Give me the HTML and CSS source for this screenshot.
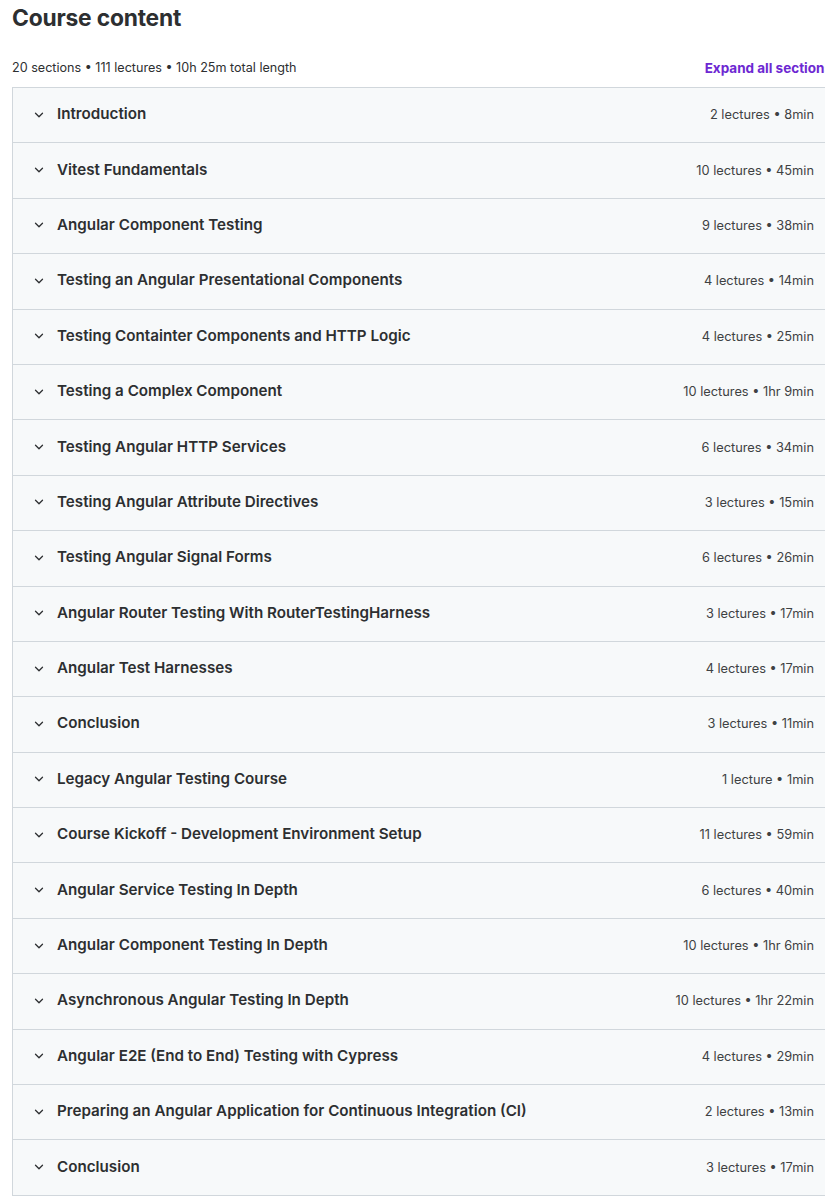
FILE: index.html
```html
<!DOCTYPE html>
<html>
<head>
<meta charset="utf-8">
<link rel="stylesheet" href="styles.css">
</head>
<body>
<div class="page">
  <h2 class="title">Course content</h2>
  <div class="meta">
    <span>20 sections • 111 lectures • 10h 25m total length</span>
    <a class="expand">Expand all sections</a>
  </div>
  <div class="sections" id="sections"></div>
</div>
<script src="app.js"></script>
</body>
</html>
```
FILE: app.js
```js
const data = [
["Introduction","2 lectures • 8min"],
["Vitest Fundamentals","10 lectures • 45min"],
["Angular Component Testing","9 lectures • 38min"],
["Testing an Angular Presentational Components","4 lectures • 14min"],
["Testing Containter Components and HTTP Logic","4 lectures • 25min"],
["Testing a Complex Component","10 lectures • 1hr 9min"],
["Testing Angular HTTP Services","6 lectures • 34min"],
["Testing Angular Attribute Directives","3 lectures • 15min"],
["Testing Angular Signal Forms","6 lectures • 26min"],
["Angular Router Testing With RouterTestingHarness","3 lectures • 17min"],
["Angular Test Harnesses","4 lectures • 17min"],
["Conclusion","3 lectures • 11min"],
["Legacy Angular Testing Course","1 lecture • 1min"],
["Course Kickoff - Development Environment Setup","11 lectures • 59min"],
["Angular Service Testing In Depth","6 lectures • 40min"],
["Angular Component Testing In Depth","10 lectures • 1hr 6min"],
["Asynchronous Angular Testing In Depth","10 lectures • 1hr 22min"],
["Angular E2E (End to End) Testing with Cypress","4 lectures • 29min"],
["Preparing an Angular Application for Continuous Integration (CI)","2 lectures • 13min"],
["Conclusion","3 lectures • 17min"]
];
const root = document.getElementById('sections');
const chev = '<svg class="chev" viewBox="0 0 12 12" width="12" height="12"><path d="M2.5 4.2 L6 7.7 L9.5 4.2" fill="none" stroke="#2d2f31" stroke-width="1.3" stroke-linecap="round" stroke-linejoin="round"/></svg>';
for (const [t, m] of data) {
  const row = document.createElement('div');
  row.className = 'row';
  row.innerHTML = chev + '<span class="name">' + t + '</span><span class="len">' + m + '</span>';
  root.appendChild(row);
}
```
FILE: styles.css
```css
html, body { margin: 0; padding: 0; overflow: hidden; background: #fff; }
body { font-family: Inter, "Noto Sans", sans-serif; color: #2d2f31; }
.page { width: 827px; padding-left: 12px; }
.title { margin: 0; font-size: 22.8px; font-weight: 700; line-height: 36px; letter-spacing: -0.2px; }
.meta { display: flex; justify-content: space-between; align-items: center; height: 51px; padding-top: 12px; box-sizing: border-box; font-size: 12.6px; }
.expand { color: #6d28d2; font-weight: 700; font-size: 13.5px; padding-right: 7px; }
.sections { border: 1px solid #d1d7dc; border-bottom: none; }
.row { display: flex; align-items: center; height: 55.4px; box-sizing: border-box; border-bottom: 1px solid #d1d7dc; background: #f7f9fa; padding: 0 24px 0 20px; }
.chev { flex: none; margin-right: 12px; margin-top: -1px; }
.name { font-weight: 600; font-size: 15.2px; flex: 1; margin-top: -3px; }
.len { font-size: 12.8px; margin-top: -1px; color: #3e4143; }
```
